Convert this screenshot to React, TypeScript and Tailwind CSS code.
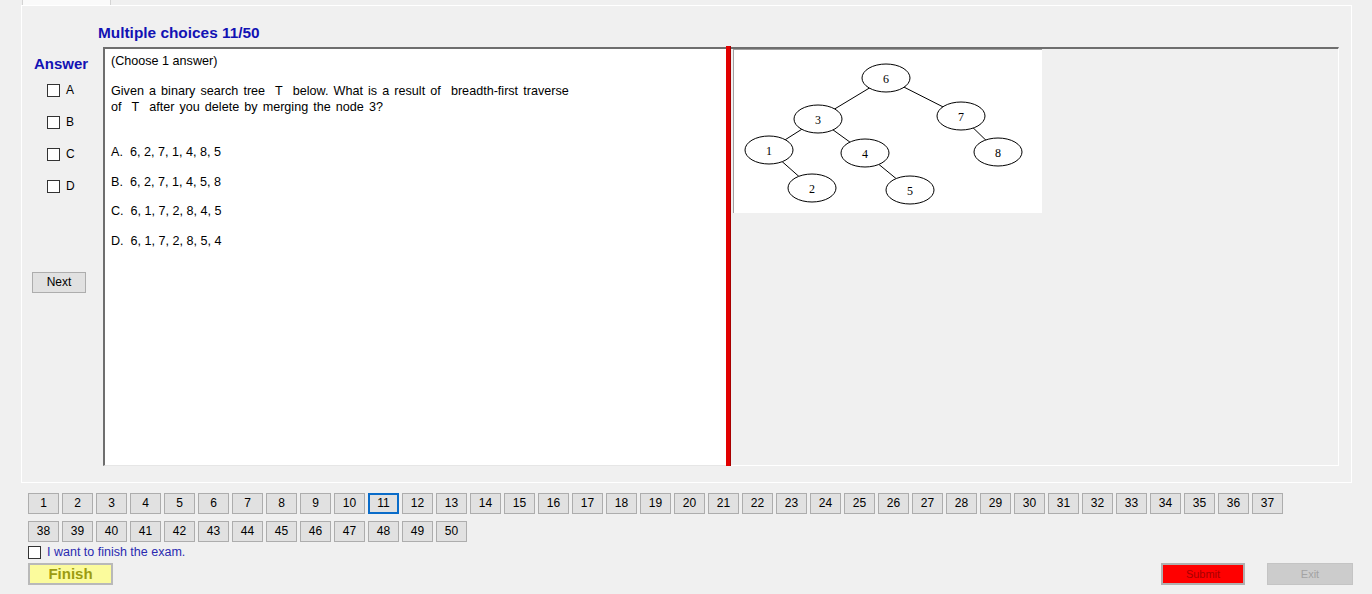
import React from "react";

const nodes: { id: number; x: number; y: number }[] = [
  { id: 6, x: 152, y: 28 },
  { id: 3, x: 84, y: 69 },
  { id: 7, x: 227, y: 66 },
  { id: 1, x: 35, y: 100 },
  { id: 4, x: 131, y: 103 },
  { id: 8, x: 264, y: 102 },
  { id: 2, x: 78, y: 138 },
  { id: 5, x: 176, y: 140 },
];

const edges: [number, number][] = [
  [6, 3],
  [6, 7],
  [3, 1],
  [3, 4],
  [1, 2],
  [4, 5],
  [7, 8],
];

const options = [
  "A.  6, 2, 7, 1, 4, 8, 5",
  "B.  6, 2, 7, 1, 4, 5, 8",
  "C.  6, 1, 7, 2, 8, 4, 5",
  "D.  6, 1, 7, 2, 8, 5, 4",
];

function Box() {
  return <span className="block w-[13px] h-[13px] bg-white border border-[#333]" />;
}

function Tree() {
  const pos = (id: number) => nodes.find((n) => n.id === id)!;
  return (
    <svg width="308" height="163" viewBox="0 0 308 163">
      {edges.map(([a, b]) => (
        <line
          key={`${a}-${b}`}
          x1={pos(a).x}
          y1={pos(a).y}
          x2={pos(b).x}
          y2={pos(b).y}
          stroke="#000"
          strokeWidth="1"
        />
      ))}
      {nodes.map((n) => (
        <g key={n.id}>
          <ellipse cx={n.x} cy={n.y} rx="24" ry="14" fill="#fff" stroke="#000" strokeWidth="1" />
          <text
            x={n.x}
            y={n.y + 1}
            textAnchor="middle"
            dominantBaseline="central"
            fontFamily="'Liberation Serif', serif"
            fontSize="12"
          >
            {n.id}
          </text>
        </g>
      ))}
    </svg>
  );
}

export default function App() {
  const nums = Array.from({ length: 50 }, (_, i) => i + 1);

  return (
    <div className="w-[1372px] h-[594px] bg-[#f0f0f0] overflow-hidden font-['Liberation_Sans',Arial,sans-serif] text-[12px] text-black">
      {/* tab header */}
      <div className="h-[5px] flex">
        <div className="ml-[22px] w-[89px] bg-[#fafafa] border-x border-[#d4d4d4]" />
      </div>

      {/* tab page */}
      <div className="ml-[21px] w-[1331px] h-[478px] border border-white">
        <div className="h-[41px] pt-[18px] pl-[76px] text-[15.4px] leading-[17px] font-bold text-[#1212b4]">
          Multiple choices 11/50
        </div>

        <div className="flex">
          {/* answer column */}
          <div className="w-[81px] pt-[8px]">
            <div className="pl-[12px] text-[15px] leading-[17px] font-bold text-[#1212b4]">Answer</div>
            <div className="mt-[2px]">
              {["A", "B", "C", "D"].map((l) => (
                <div key={l} className="h-[32px] flex items-center pl-[25px] gap-[6px]">
                  <Box />
                  <span className="leading-[14px]">{l}</span>
                </div>
              ))}
            </div>
            <button className="mt-[70px] ml-[10px] w-[54px] h-[21px] bg-[#e1e1e1] border border-[#adadad] text-[12px] leading-[19px]">
              Next
            </button>
          </div>

          {/* content */}
          <div className="flex w-[1236px] h-[419px]">
            <div className="w-[623px] bg-white border-l-2 border-t-2 border-[#6e6e6e] border-b border-b-[#e6e6e6] pl-[6px] pt-[4px] text-[12.6px] leading-[16px]">
              <div>(Choose 1 answer)</div>
              <div className="mt-[14px] whitespace-pre [word-spacing:1.6px]">
                <div>Given a binary search tree  T  below. What is a result of  breadth-first traverse</div>
                <div>of  T  after you delete by merging the node 3?</div>
              </div>
              <div className="mt-[23px] whitespace-pre">
                {options.map((o) => (
                  <div key={o} className="leading-[29.7px]">
                    {o}
                  </div>
                ))}
              </div>
            </div>
            <div className="w-[5px] -mt-[1px] bg-[#e20000] border-r border-[#a80000]" />
            <div className="flex-1 border-t-2 border-[#6e6e6e] border-r border-r-white border-b border-b-white pl-[2px]">
              <div className="w-[309px] h-[164px] bg-white border-t border-l border-[#a0a0a0]">
                <Tree />
              </div>
            </div>
          </div>
        </div>
      </div>

      {/* question navigator */}
      <div className="pl-[28px] pt-[10px]">
        <div className="grid grid-cols-[repeat(37,31px)] gap-x-[3px] gap-y-[7px]">
          {nums.map((n) => (
            <button
              key={n}
              className={`h-[21px] text-[12px] leading-[17px] bg-[#e1e1e1] ${
                n === 11 ? "border-2 border-[#0a6cc9]" : "border border-[#adadad]"
              }`}
            >
              {n}
            </button>
          ))}
        </div>

        <div className="mt-[2px] h-[16px] flex items-center gap-[6px]">
          <Box />
          <span className="text-[12.5px] text-[#2a2ab0] leading-[14px]">I want to finish the exam.</span>
        </div>

        <div className="mt-[3px] flex items-center pr-[19px]">
          <button className="w-[85px] h-[22px] bg-[#fbfb9c] border-2 border-[#b9b9b9] text-[15px] leading-[16px] font-bold text-[#9c9c10]">
            Finish
          </button>
          <button className="ml-auto w-[84px] h-[22px] bg-[#ff0000] border-2 border-[#b0b0b0] text-[11px] text-[#a80000]">
            Submit
          </button>
          <button className="ml-[22px] w-[86px] h-[22px] bg-[#cccccc] border border-[#c4c4c4] text-[11px] text-[#a3a3a3]">
            Exit
          </button>
        </div>
      </div>
    </div>
  );
}
